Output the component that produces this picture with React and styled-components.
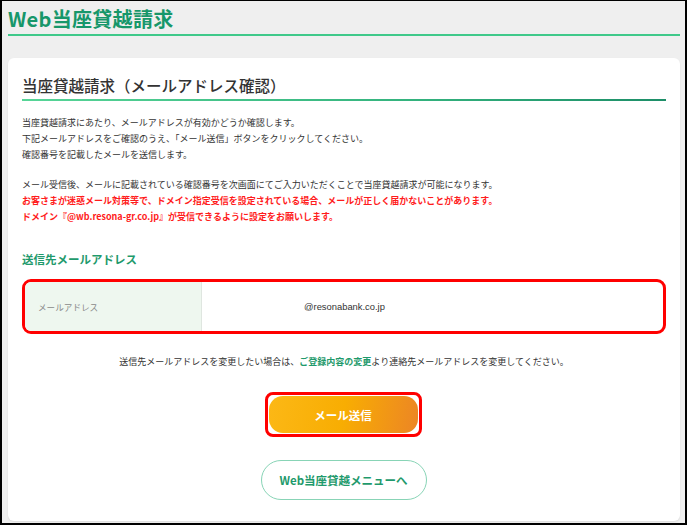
import React from "react";
import styled, { createGlobalStyle } from "styled-components";

const Global = createGlobalStyle`
  html, body { margin: 0; padding: 0; }
  body { font-family: "Noto Sans CJK JP", "Noto Sans", sans-serif; }
  * { box-sizing: border-box; }
`;

const Frame = styled.div`
  width: 687px;
  height: 525px;
  background: #efefef;
  border-style: solid;
  border-color: #000;
  border-width: 1px 2px 2px 2px;
  padding: 0 5px 2px 6px;
  display: flex;
  flex-direction: column;
  overflow: hidden;
`;

const PageTitle = styled.h1`
  margin: 6px 0 0;
  font-size: 20px;
  line-height: 24px;
  font-weight: 700;
  color: #17976a;
  padding-bottom: 3px;
  border-bottom: 2px solid #3fc98a;
  letter-spacing: 0.3px;
`;

const Card = styled.section`
  flex: 1;
  margin-top: 22px;
  background: #fff;
  border-radius: 6px;
  box-shadow: 0 1px 2px rgba(0, 0, 0, 0.08);
  padding: 17px 14px 19px;
  display: flex;
  flex-direction: column;
`;

const Heading = styled.h2`
  margin: 0;
  font-size: 15.5px;
  line-height: 20px;
  font-weight: 500;
  color: #333;
  &::after {
    content: "";
    display: block;
    height: 2px;
    margin-top: 4px;
    background: linear-gradient(90deg, #57d597 0%, #34b37e 60%, #1d8e68 100%);
  }
`;

const Para = styled.p`
  margin: ${(p) => p.$top}px 0 0;
  font-size: 9px;
  line-height: 16px;
  color: #333;
`;

const Warn = styled.span`
  display: block;
  color: #ff1c1c;
  font-weight: 700;
`;

const Label = styled.h3`
  margin: 26px 0 0;
  font-size: 11.5px;
  line-height: 16px;
  font-weight: 700;
  color: #1f9a6c;
`;

const Highlight = styled.div`
  margin-top: 12px;
  border: 3px solid #ff0000;
  border-radius: 9px;
  overflow: hidden;
  height: 55px;
  display: grid;
  grid-template-columns: 177px 1fr;
`;

const KeyCell = styled.div`
  background: #eef7ef;
  border-right: 1px solid #dfe6e0;
  display: flex;
  align-items: center;
  padding-left: 13px;
  font-size: 8.6px;
  color: #8a8a8a;
`;

const ValueCell = styled.div`
  display: flex;
  align-items: center;
  padding-left: 102px;
  font-family: "Liberation Sans", Arial, sans-serif;
  font-size: 9.4px;
  color: #333;
`;

const Note = styled.p`
  margin: 20px 0 0;
  text-align: center;
  font-size: 9px;
  line-height: 16px;
  color: #333;
`;

const LinkText = styled.a`
  color: #1f9a6c;
  font-weight: 700;
  text-decoration: none;
`;

const Buttons = styled.div`
  display: flex;
  flex-direction: column;
  align-items: center;
`;

const RedOutline = styled.div`
  margin-top: 22px;
  margin-left: -2px;
  width: 157px;
  height: 45px;
  border: 3px solid #ff0000;
  border-radius: 8px;
  padding: 1px;
  display: flex;
`;

const SendButton = styled.button`
  flex: 1;
  border: none;
  border-radius: 14px;
  background: linear-gradient(100deg, #fcb816 0%, #f8ad02 50%, #ec8525 100%);
  color: #fff;
  font-family: inherit;
  font-size: 11.5px;
  font-weight: 700;
  cursor: pointer;
`;

const MenuButton = styled.button`
  margin-top: 23px;
  margin-left: -1px;
  width: 166px;
  height: 40px;
  border: 1.5px solid #88d4b6;
  border-radius: 20px;
  background: #fff;
  color: #1f9a6c;
  font-family: inherit;
  font-size: 11.5px;
  font-weight: 700;
  cursor: pointer;
`;

export default function App() {
  return (
    <>
      <Global />
      <Frame>
        <PageTitle>Web当座貸越請求</PageTitle>
        <Card>
          <Heading>当座貸越請求（メールアドレス確認）</Heading>
          <Para $top={14}>
            当座貸越請求にあたり、メールアドレスが有効かどうか確認します。
            <br />
            下記メールアドレスをご確認のうえ、「メール送信」ボタンをクリックしてください。
            <br />
            確認番号を記載したメールを送信します。
          </Para>
          <Para $top={14}>
            メール受信後、メールに記載されている確認番号を次画面にてご入力いただくことで当座貸越請求が可能になります。
            <Warn>
              お客さまが迷惑メール対策等で、ドメイン指定受信を設定されている場合、メールが正しく届かないことがあります。
            </Warn>
            <Warn>ドメイン『@wb.resona-gr.co.jp』が受信できるように設定をお願いします。</Warn>
          </Para>
          <Label>送信先メールアドレス</Label>
          <Highlight>
            <KeyCell>メールアドレス</KeyCell>
            <ValueCell>@resonabank.co.jp</ValueCell>
          </Highlight>
          <Note>
            送信先メールアドレスを変更したい場合は、
            <LinkText href="#">ご登録内容の変更</LinkText>
            より連絡先メールアドレスを変更してください。
          </Note>
          <Buttons>
            <RedOutline>
              <SendButton>メール送信</SendButton>
            </RedOutline>
            <MenuButton>Web当座貸越メニューへ</MenuButton>
          </Buttons>
        </Card>
      </Frame>
    </>
  );
}
